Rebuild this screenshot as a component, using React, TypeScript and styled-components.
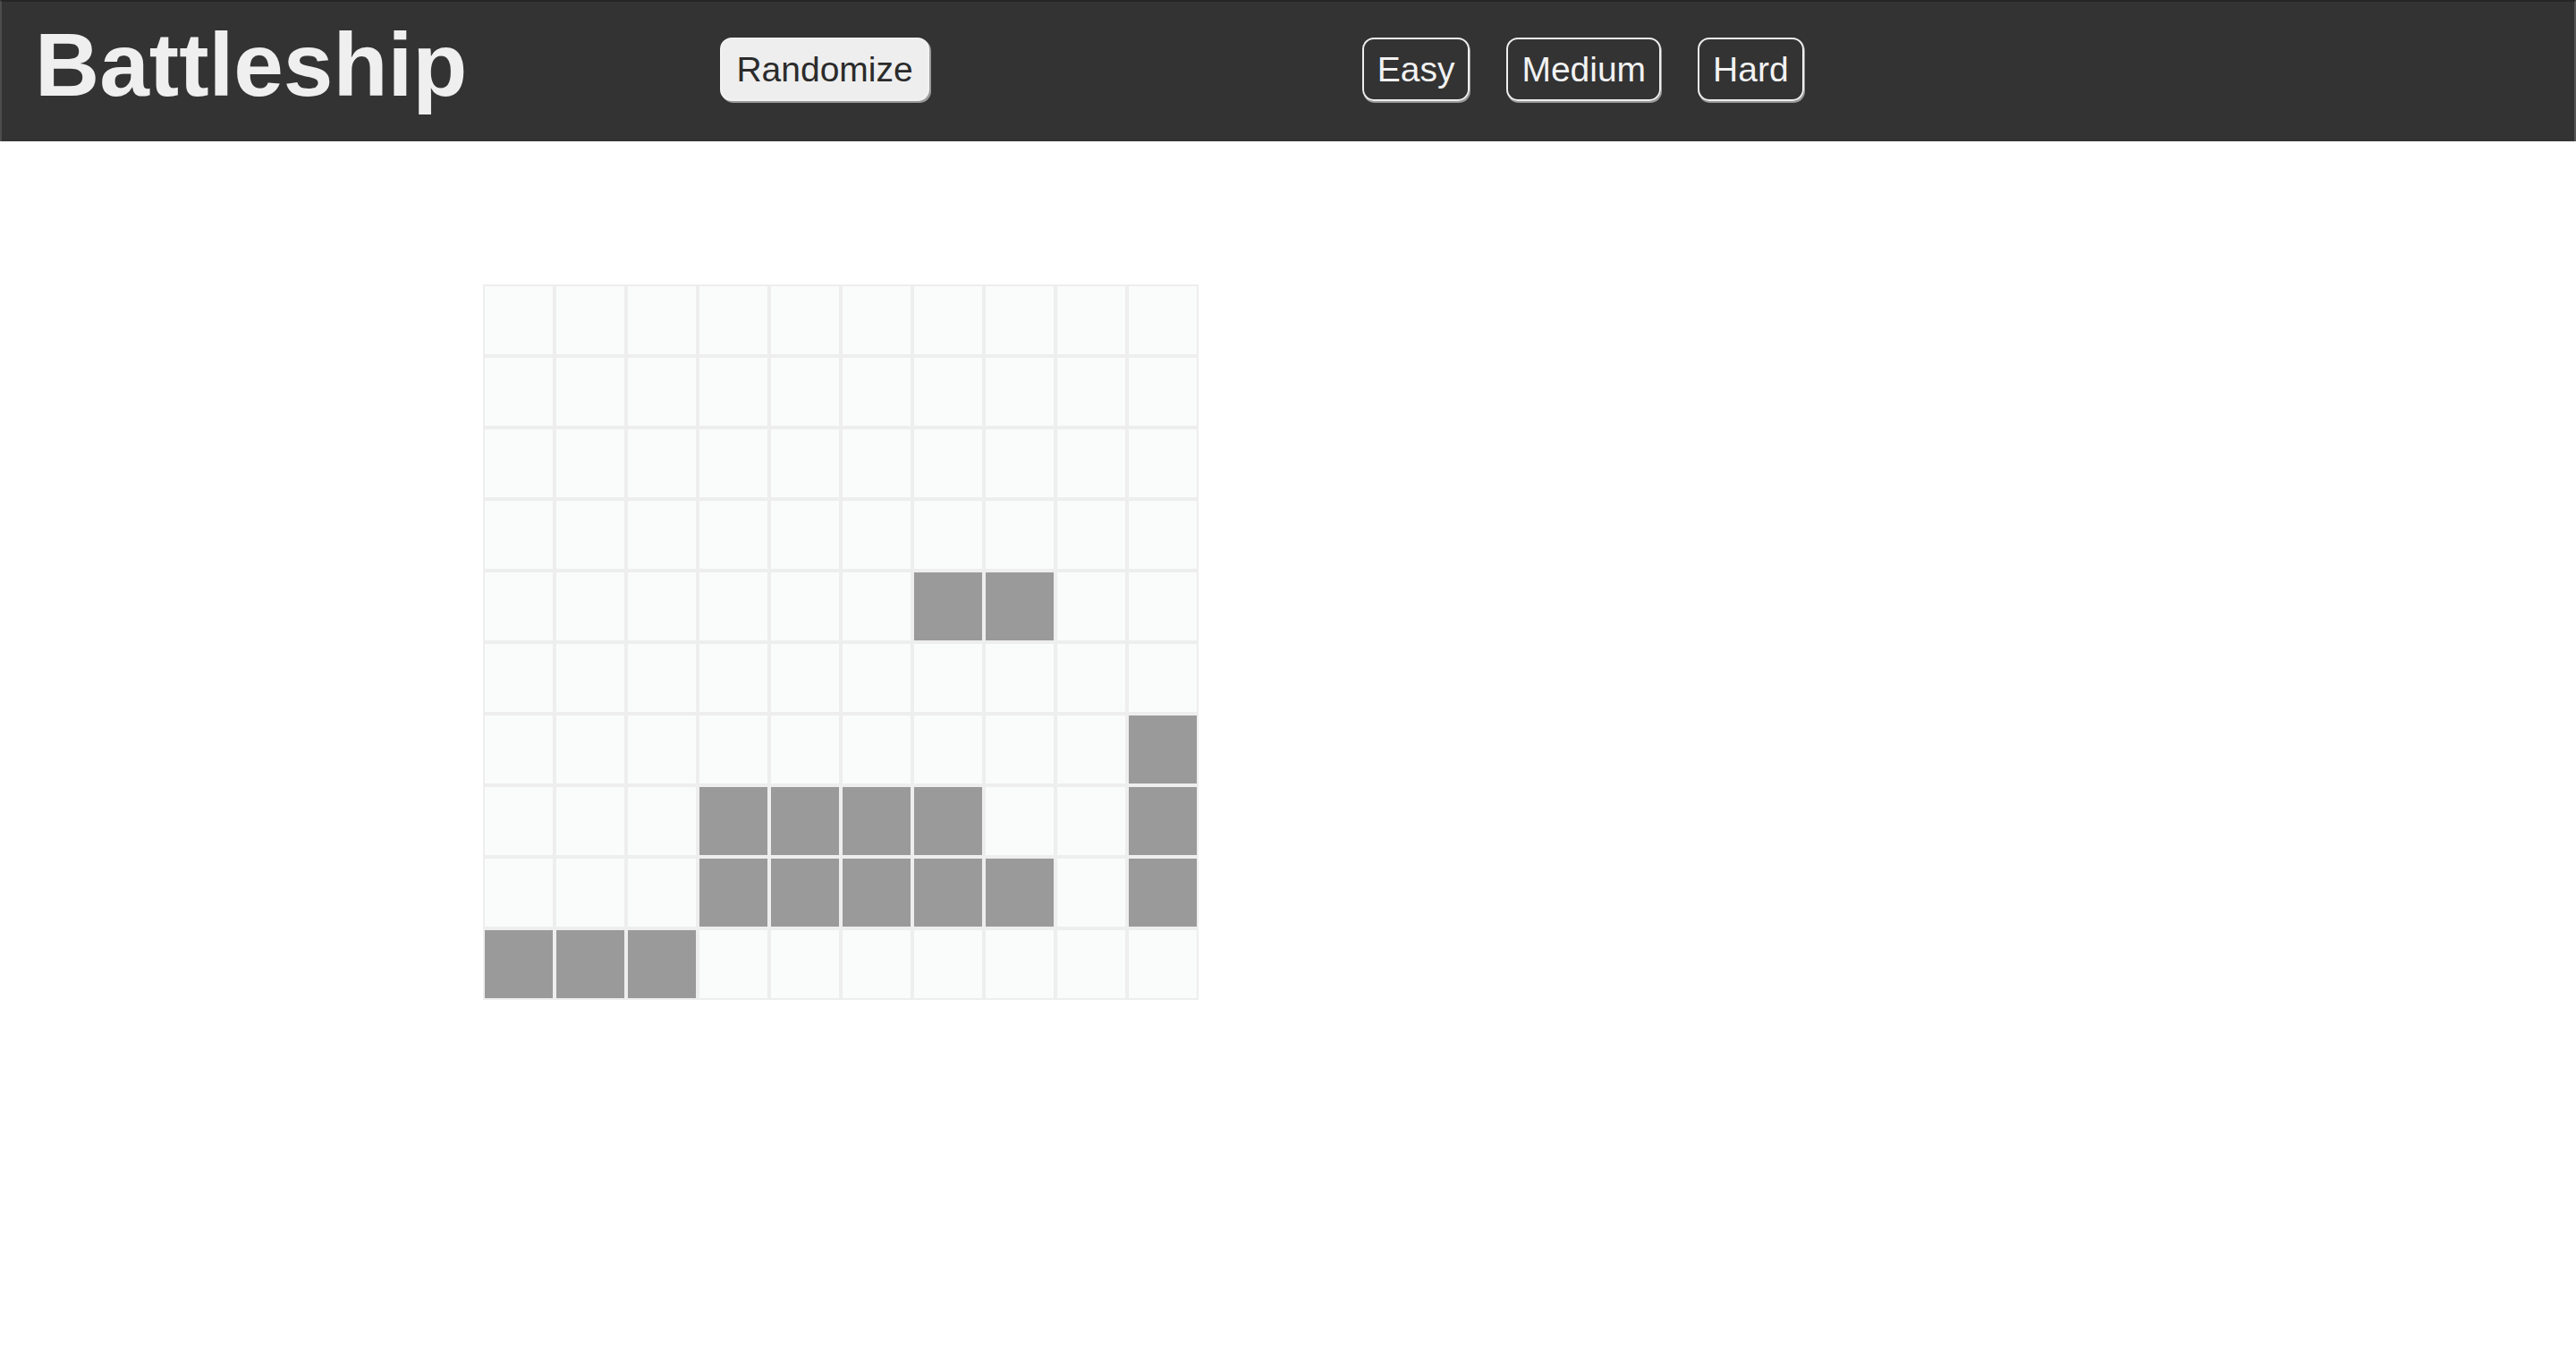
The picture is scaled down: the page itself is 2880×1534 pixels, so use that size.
import React from "react";
import styled, { createGlobalStyle } from "styled-components";

const GlobalStyle = createGlobalStyle`
  html, body {
    margin: 0;
    padding: 0;
    background: #ffffff;
    font-family: "Liberation Sans", Arial, Helvetica, sans-serif;
  }
  * { box-sizing: border-box; }
`;

const Page = styled.div`
  width: 2880px;
  min-height: 1534px;
  background: #ffffff;
`;

const Header = styled.header`
  display: flex;
  align-items: flex-start;
  height: 158px;
  background: #333333;
  border-top: 2px solid #262626;
  border-left: 2px solid #4d4d4d;
  border-right: 2px solid #555555;
  padding-left: 37px;
`;

const Title = styled.h1`
  margin: 20px 0 0 0;
  font-family: "Liberation Sans", Arial, Helvetica, sans-serif;
  font-weight: 700;
  font-size: 100px;
  line-height: 100px;
  color: #efefef;
`;

const Button = styled.button<{ $variant: "light" | "dark" }>`
  height: 71px;
  margin-top: 40px;
  font-family: "Liberation Sans", Arial, Helvetica, sans-serif;
  font-size: 39px;
  line-height: 1;
  border-radius: 13px;
  cursor: pointer;
  border: 2px solid ${(p) => (p.$variant === "light" ? "#f2f2f2" : "#eeeeee")};
  background: ${(p) => (p.$variant === "light" ? "#eeeeee" : "transparent")};
  color: ${(p) => (p.$variant === "light" ? "#2b2b2b" : "#f2f2f2")};
  padding: ${(p) => (p.$variant === "light" ? "0 16px" : "0 15px")};
  box-shadow: ${(p) =>
    p.$variant === "light" ? "2px 2px 0 #9a9a9a" : "1px 2px 0 #9a9a9a"};
`;

const RandomizeSlot = styled.div`
  margin-left: 283px;
  display: flex;
`;

const Difficulty = styled.div`
  display: flex;
  gap: 41px;
  margin-left: 484px;
`;

const Main = styled.main`
  padding: 160px 0 0 540px;
`;

const Board = styled.div`
  display: grid;
  grid-template-columns: repeat(10, 80px);
  grid-template-rows: repeat(10, 80px);
  width: 800px;
`;

const Cell = styled.div<{ $ship: boolean }>`
  width: 80px;
  height: 80px;
  border: 2px solid #eeeeee;
  background: ${(p) => (p.$ship ? "#9a9a9a" : "#fafbfb")};
`;

const ships = new Set<string>([
  "4-6", "4-7",
  "6-9",
  "7-3", "7-4", "7-5", "7-6", "7-9",
  "8-3", "8-4", "8-5", "8-6", "8-7", "8-9",
  "9-0", "9-1", "9-2",
]);

export default function App() {
  const cells = [];
  for (let r = 0; r < 10; r++) {
    for (let c = 0; c < 10; c++) {
      cells.push(<Cell key={`${r}-${c}`} $ship={ships.has(`${r}-${c}`)} />);
    }
  }
  return (
    <Page>
      <GlobalStyle />
      <Header>
        <Title>Battleship</Title>
        <RandomizeSlot>
          <Button $variant="light">Randomize</Button>
        </RandomizeSlot>
        <Difficulty>
          <Button $variant="dark">Easy</Button>
          <Button $variant="dark">Medium</Button>
          <Button $variant="dark">Hard</Button>
        </Difficulty>
      </Header>
      <Main>
        <Board>{cells}</Board>
      </Main>
    </Page>
  );
}
